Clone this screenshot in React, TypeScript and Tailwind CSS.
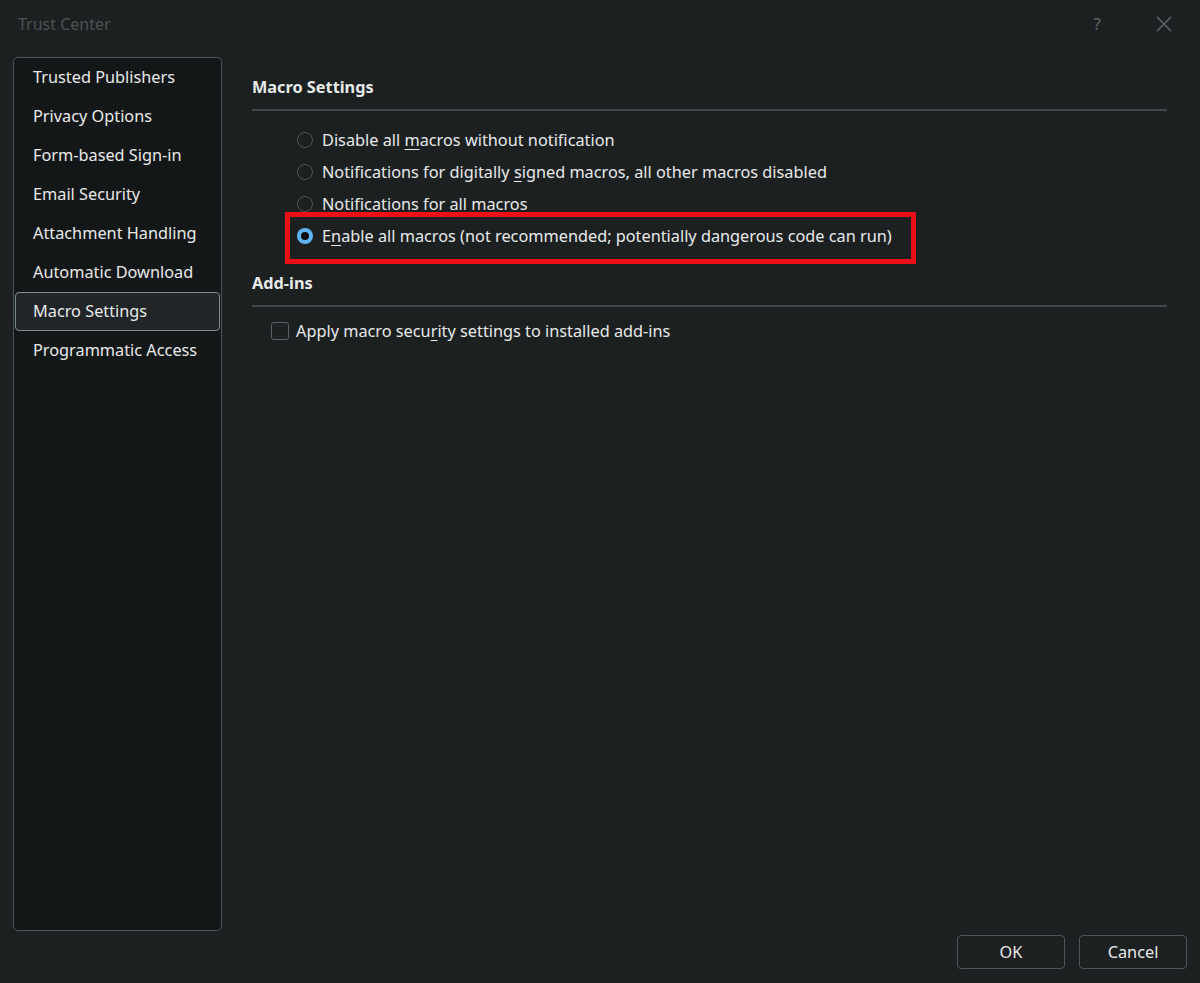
import React from "react";

const navItems = [
  "Trusted Publishers",
  "Privacy Options",
  "Form-based Sign-in",
  "Email Security",
  "Attachment Handling",
  "Automatic Download",
  "Macro Settings",
  "Programmatic Access",
];

function Radio({ checked }: { checked?: boolean }) {
  if (checked) {
    return (
      <span className="flex h-[16px] w-[16px] shrink-0 items-center justify-center rounded-full bg-[#63b4f2]">
        <span className="h-[8px] w-[8px] rounded-full bg-[#0d0f10]" />
      </span>
    );
  }
  return <span className="h-[16px] w-[16px] shrink-0 rounded-full border border-[#4f5759]" />;
}

function U({ children }: { children: React.ReactNode }) {
  return <span className="underline decoration-1 underline-offset-[3px]">{children}</span>;
}

export default function App() {
  return (
    <div
      className="flex h-[983px] w-[1200px] flex-col bg-[#1c2021] text-[#e8eaea]"
      style={{ fontFamily: '"Noto Sans", "Open Sans", sans-serif' }}
    >
      {/* title bar */}
      <div className="flex h-[47px] items-center pl-[18px] pr-[28px]">
        <span className="text-[16px] text-[#4b5254]">Trust Center</span>
        <span className="ml-auto mr-[55px] text-[17px] text-[#5d6668]">?</span>
        <svg width="16" height="16" viewBox="0 0 16 16" className="text-[#5d6668]">
          <path d="M1 1 L15 15 M15 1 L1 15" stroke="currentColor" strokeWidth="1.5" />
        </svg>
      </div>

      <div className="flex min-h-0 flex-1">
        {/* left navigation */}
        <div className="ml-[13px] mt-[10px] flex h-[874px] w-[209px] flex-col rounded-[5px] border border-[#4a5356] bg-[#141718]">
          {navItems.map((item) => {
            const selected = item === "Macro Settings";
            return (
              <div
                key={item}
                className={
                  selected
                    ? "mx-[1px] flex h-[39px] items-center rounded-[4px] border border-[#7f8e8e] bg-[#212527] pb-[1px] pl-[17px] text-[16.3px]"
                    : "mx-[1px] flex h-[39px] items-center border border-transparent pb-[1px] pl-[17px] text-[16.3px]"
                }
              >
                {item}
              </div>
            );
          })}
        </div>

        {/* right content */}
        <div className="ml-[30px] mr-[33px] flex flex-1 flex-col text-[16.3px]">
          <div className="mt-[28px] font-bold">Macro Settings</div>
          <div className="mt-[10px] h-[2px] bg-[#3f4749]" />

          <div className="relative mt-[13px] flex flex-col pl-[45px]">
            <label className="flex h-[32px] items-center gap-[9px]">
              <Radio />
              <span>
                Disable all <U>m</U>acros without notification
              </span>
            </label>
            <label className="flex h-[32px] items-center gap-[9px]">
              <Radio />
              <span>
                Notifications for digitally <U>s</U>igned macros, all other macros disabled
              </span>
            </label>
            <label className="flex h-[32px] items-center gap-[9px]">
              <Radio />
              <span>Notifications for all macros</span>
            </label>
            <label className="flex h-[32px] items-center gap-[9px]">
              <Radio checked />
              <span>
                E<U>n</U>able all macros (not recommended; potentially dangerous code can run)
              </span>
            </label>
            {/* highlight frame around the selected option */}
            <div className="pointer-events-none absolute left-[33px] top-[88px] h-[52px] w-[631px] border-[5px] border-[#ec0f16]" />
          </div>

          <div className="mt-[19px] font-bold">Add-ins</div>
          <div className="mt-[9px] h-[2px] bg-[#3f4749]" />
          <label className="mt-[12px] flex items-center gap-[7px] pl-[19px]">
            <span className="h-[18px] w-[18px] shrink-0 rounded-[3px] border-[1.5px] border-[#596264]" />
            <span>
              Apply macro secu<U>r</U>ity settings to installed add-ins
            </span>
          </label>
        </div>
      </div>

      {/* footer buttons */}
      <div className="flex justify-end gap-[14px] pb-[14px] pr-[13px]">
        <button className="h-[34px] w-[108px] rounded-[4px] border border-[#4c5557] bg-[#1c2021] text-[16.3px] text-[#e8eaea]">
          OK
        </button>
        <button className="h-[34px] w-[108px] rounded-[4px] border border-[#4c5557] bg-[#1c2021] text-[16.3px] text-[#e8eaea]">
          Cancel
        </button>
      </div>
    </div>
  );
}
